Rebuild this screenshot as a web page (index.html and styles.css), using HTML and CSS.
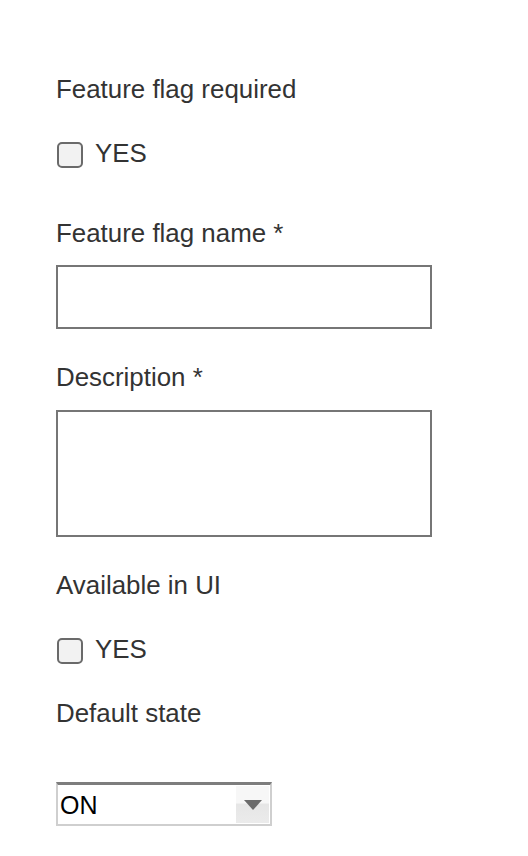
FILE: index.html
```html
<!DOCTYPE html>
<html>
<head>
<meta charset="utf-8">
<link rel="stylesheet" href="styles.css">
</head>
<body>
<form class="form">
  <div class="label">Feature flag required</div>
  <label class="check-row gap-a"><span class="checkbox"></span><span>YES</span></label>

  <div class="label gap-b">Feature flag name *</div>
  <div class="text-input gap-c"></div>

  <div class="label gap-d">Description *</div>
  <div class="text-area gap-f"></div>

  <div class="label gap-d">Available in UI</div>
  <label class="check-row gap-a"><span class="checkbox"></span><span>YES</span></label>

  <div class="label gap-a">Default state</div>
  <div class="select gap-e">
    <span class="select-value">ON</span>
    <span class="select-btn"><svg width="18" height="10" viewBox="0 0 18 10"><path d="M0 0 H18 L9 10 Z" fill="#6b6b6b"/></svg></span>
  </div>
</form>
</body>
</html>
```

FILE: styles.css
```css
html, body {
  margin: 0;
  padding: 0;
  background: #ffffff;
}

.form {
  display: flex;
  flex-direction: column;
  align-items: flex-start;
  padding: 74px 0 0 56px;
  font-family: "Liberation Sans", Arial, Helvetica, sans-serif;
  font-size: 25.9px;
  line-height: 30px;
  color: #333333;
}

.label {
  height: 30px;
}

.gap-a { margin-top: 34px; }
.gap-b { margin-top: 50px; }
.gap-c { margin-top: 17px; }
.gap-d { margin-top: 33px; }
.gap-f { margin-top: 18px; }
.gap-e { margin-top: 54px; }

.check-row {
  display: flex;
  align-items: center;
  gap: 12px;
  height: 30px;
  padding-left: 1px;
}

.checkbox {
  box-sizing: border-box;
  width: 26px;
  height: 26px;
  border: 2px solid #6a6a6a;
  border-radius: 5px;
  background: #f2f2f2;
  margin-top: 3px;
}

.text-input {
  box-sizing: border-box;
  width: 376px;
  height: 64px;
  border: 2px solid #767676;
  background: #fff;
}

.text-area {
  box-sizing: border-box;
  width: 376px;
  height: 127px;
  border: 2px solid #767676;
  background: #fff;
}

.select {
  box-sizing: border-box;
  display: flex;
  align-items: stretch;
  width: 216px;
  height: 44px;
  border: 2px solid #cfcfcf;
  border-top: 3px solid #7d7d7d;
  background: #fff;
}

.select-value {
  flex: 1;
  display: flex;
  align-items: center;
  padding-left: 2px;
  color: #000;
  font-size: 25px;
}

.select-btn {
  width: 33px;
  display: flex;
  align-items: center;
  justify-content: center;
  margin: 1px 1px 1px 0;
  background: linear-gradient(#f7f7f7 0%, #f7f7f7 45%, #e6e6e6 50%, #ebebeb 100%);
}
```
